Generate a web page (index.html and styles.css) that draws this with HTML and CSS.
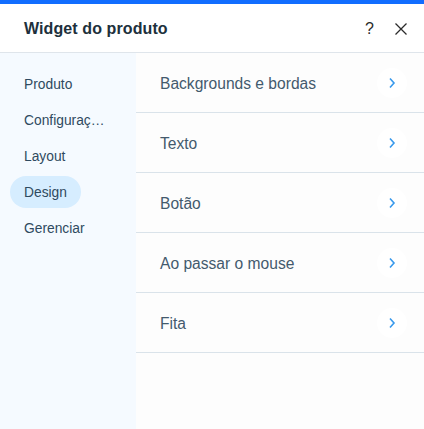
FILE: index.html
```html
<!DOCTYPE html>
<html lang="pt">
<head>
<meta charset="utf-8">
<link rel="stylesheet" href="styles.css">
</head>
<body>
<div class="panel">
  <div class="topbar"></div>
  <header class="header">
    <h1 class="title">Widget do produto</h1>
    <div class="actions">
      <span class="help">?</span>
      <svg class="close" width="14" height="14" viewBox="0 0 14 14"><path d="M1.5 1.5 L12.5 12.5 M12.5 1.5 L1.5 12.5" stroke="#2b2b2b" stroke-width="1.3" fill="none"/></svg>
    </div>
  </header>
  <div class="body">
    <nav class="side">
      <div class="nav-item">Produto</div>
      <div class="nav-item">Configuraç…</div>
      <div class="nav-item">Layout</div>
      <div class="nav-item active">Design</div>
      <div class="nav-item">Gerenciar</div>
    </nav>
    <main class="list">
      <div class="row"><span class="label">Backgrounds e bordas</span><span class="chev"><svg width="8" height="12" viewBox="0 0 8 12"><path d="M2 1.5 L6 6 L2 10.5" stroke="#3899ec" stroke-width="1.6" fill="none"/></svg></span></div>
      <div class="row"><span class="label">Texto</span><span class="chev"><svg width="8" height="12" viewBox="0 0 8 12"><path d="M2 1.5 L6 6 L2 10.5" stroke="#3899ec" stroke-width="1.6" fill="none"/></svg></span></div>
      <div class="row"><span class="label">Botão</span><span class="chev"><svg width="8" height="12" viewBox="0 0 8 12"><path d="M2 1.5 L6 6 L2 10.5" stroke="#3899ec" stroke-width="1.6" fill="none"/></svg></span></div>
      <div class="row"><span class="label">Ao passar o mouse</span><span class="chev"><svg width="8" height="12" viewBox="0 0 8 12"><path d="M2 1.5 L6 6 L2 10.5" stroke="#3899ec" stroke-width="1.6" fill="none"/></svg></span></div>
      <div class="row"><span class="label">Fita</span><span class="chev"><svg width="8" height="12" viewBox="0 0 8 12"><path d="M2 1.5 L6 6 L2 10.5" stroke="#3899ec" stroke-width="1.6" fill="none"/></svg></span></div>
    </main>
  </div>
</div>
</body>
</html>
```
FILE: styles.css
```css
html, body {
  margin: 0;
  padding: 0;
  height: 100%;
}
body {
  font-family: "Liberation Sans", Arial, sans-serif;
  background: #ffffff;
}
.panel {
  width: 424px;
  height: 429px;
  display: flex;
  flex-direction: column;
  overflow: hidden;
}
.topbar {
  height: 4px;
  background: #116dff;
  flex: none;
}
.header {
  height: 48px;
  flex: none;
  display: flex;
  align-items: center;
  justify-content: space-between;
  padding: 1px 16px 0 24px;
  box-sizing: border-box;
  height: 49px;
  border-bottom: 1px solid #dfe5eb;
  background: #fff;
}
.title {
  margin: 0;
  font-size: 16px;
  font-weight: bold;
  color: #20303c;
  letter-spacing: 0.1px;
}
.actions {
  display: flex;
  align-items: center;
  gap: 20px;
}
.help {
  font-size: 16px;
  color: #2b2b2b;
  font-weight: 300;
}
.close {
  display: block;
}
.body {
  flex: 1;
  display: flex;
}
.side {
  width: 136px;
  flex: none;
  background: #f5faff;
  padding-top: 15px;
  box-sizing: border-box;
}
.nav-item {
  height: 32px;
  margin: 0 0 4px 10px;
  padding: 0 14px;
  display: inline-flex;
  align-items: center;
  font-size: 13.8px;
  color: #2f4a60;
  border-radius: 16px;
  white-space: nowrap;
  box-sizing: border-box;
}
.nav-item.active {
  background: #d6edff;
}
.list {
  flex: 1;
  background: #fdfdfd;
}
.row {
  height: 59px;
  border-bottom: 1px solid #dae3ea;
  display: flex;
  align-items: center;
  justify-content: space-between;
  padding: 0 17px 0 24px;
}
.label {
  font-size: 15.6px;
  color: #435a6d;
  padding-top: 2px;
}
.chev {
  width: 30px;
  height: 30px;
  border-radius: 50%;
  background: #ffffff;
  display: flex;
  align-items: center;
  justify-content: center;
}
.chev svg {
  display: block;
}
```
